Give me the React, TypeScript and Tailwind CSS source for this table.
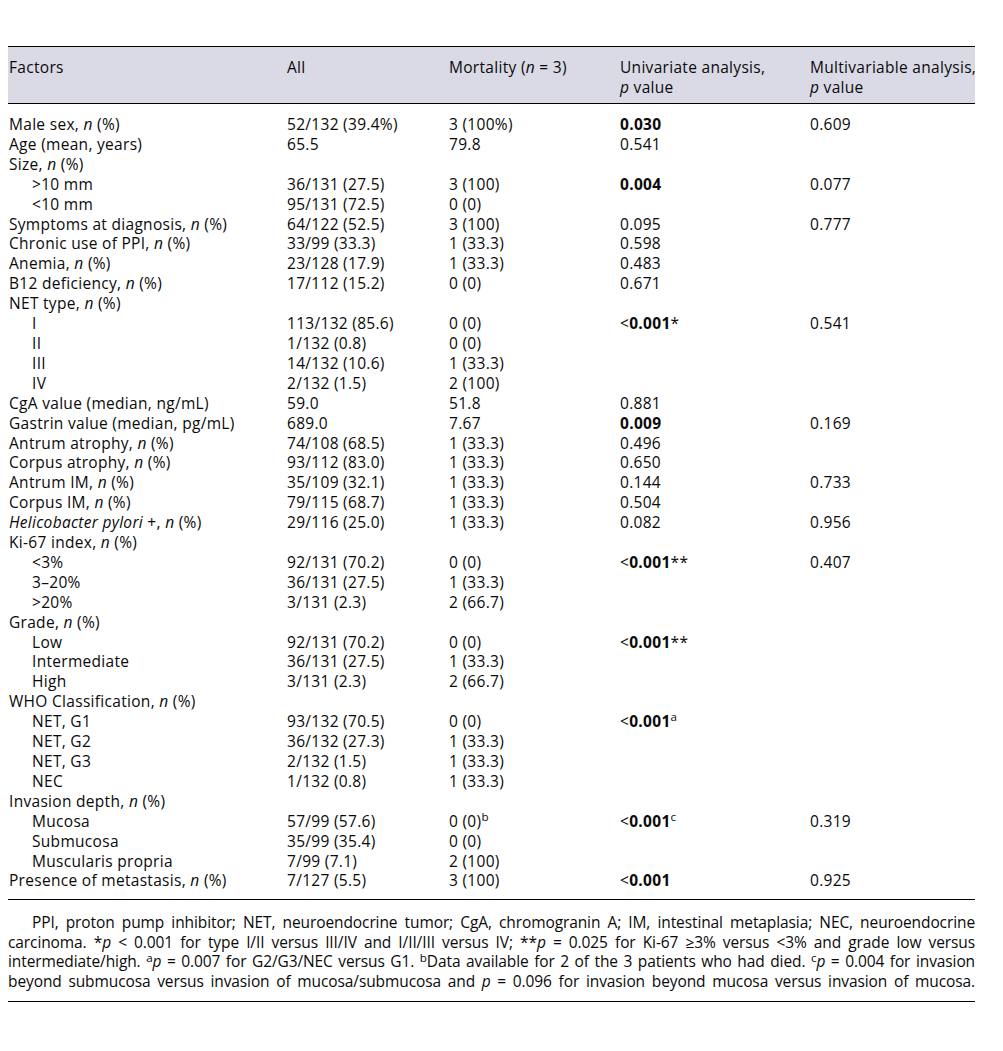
import React from "react";

type Row = {
  label: React.ReactNode;
  sub?: boolean;
  all?: string;
  mort?: React.ReactNode;
  uni?: React.ReactNode;
  multi?: string;
};

const N = () => <i>n</i>;
const P = () => <i>p</i>;

const Sig = ({ v, lt, mark }: { v: string; lt?: boolean; mark?: React.ReactNode }) => (
  <span>
    {lt && <span>&lt;</span>}
    <b className="font-bold">{v}</b>
    {mark}
  </span>
);

const rows: Row[] = [
  { label: <>Male sex, <N /> (%)</>, all: "52/132 (39.4%)", mort: "3 (100%)", uni: <Sig v="0.030" />, multi: "0.609" },
  { label: "Age (mean, years)", all: "65.5", mort: "79.8", uni: "0.541" },
  { label: <>Size, <N /> (%)</> },
  { label: ">10 mm", sub: true, all: "36/131 (27.5)", mort: "3 (100)", uni: <Sig v="0.004" />, multi: "0.077" },
  { label: "<10 mm", sub: true, all: "95/131 (72.5)", mort: "0 (0)" },
  { label: <>Symptoms at diagnosis, <N /> (%)</>, all: "64/122 (52.5)", mort: "3 (100)", uni: "0.095", multi: "0.777" },
  { label: <>Chronic use of PPI, <N /> (%)</>, all: "33/99 (33.3)", mort: "1 (33.3)", uni: "0.598" },
  { label: <>Anemia, <N /> (%)</>, all: "23/128 (17.9)", mort: "1 (33.3)", uni: "0.483" },
  { label: <>B12 deficiency, <N /> (%)</>, all: "17/112 (15.2)", mort: "0 (0)", uni: "0.671" },
  { label: <>NET type, <N /> (%)</> },
  { label: "I", sub: true, all: "113/132 (85.6)", mort: "0 (0)", uni: <Sig v="0.001" lt mark="*" />, multi: "0.541" },
  { label: "II", sub: true, all: "1/132 (0.8)", mort: "0 (0)" },
  { label: "III", sub: true, all: "14/132 (10.6)", mort: "1 (33.3)" },
  { label: "IV", sub: true, all: "2/132 (1.5)", mort: "2 (100)" },
  { label: "CgA value (median, ng/mL)", all: "59.0", mort: "51.8", uni: "0.881" },
  { label: "Gastrin value (median, pg/mL)", all: "689.0", mort: "7.67", uni: <Sig v="0.009" />, multi: "0.169" },
  { label: <>Antrum atrophy, <N /> (%)</>, all: "74/108 (68.5)", mort: "1 (33.3)", uni: "0.496" },
  { label: <>Corpus atrophy, <N /> (%)</>, all: "93/112 (83.0)", mort: "1 (33.3)", uni: "0.650" },
  { label: <>Antrum IM, <N /> (%)</>, all: "35/109 (32.1)", mort: "1 (33.3)", uni: "0.144", multi: "0.733" },
  { label: <>Corpus IM, <N /> (%)</>, all: "79/115 (68.7)", mort: "1 (33.3)", uni: "0.504" },
  { label: <><i>Helicobacter pylori</i> +, <N /> (%)</>, all: "29/116 (25.0)", mort: "1 (33.3)", uni: "0.082", multi: "0.956" },
  { label: <>Ki-67 index, <N /> (%)</> },
  { label: "<3%", sub: true, all: "92/131 (70.2)", mort: "0 (0)", uni: <Sig v="0.001" lt mark="**" />, multi: "0.407" },
  { label: "3–20%", sub: true, all: "36/131 (27.5)", mort: "1 (33.3)" },
  { label: ">20%", sub: true, all: "3/131 (2.3)", mort: "2 (66.7)" },
  { label: <>Grade, <N /> (%)</> },
  { label: "Low", sub: true, all: "92/131 (70.2)", mort: "0 (0)", uni: <Sig v="0.001" lt mark="**" /> },
  { label: "Intermediate", sub: true, all: "36/131 (27.5)", mort: "1 (33.3)" },
  { label: "High", sub: true, all: "3/131 (2.3)", mort: "2 (66.7)" },
  { label: <>WHO Classification, <N /> (%)</> },
  { label: "NET, G1", sub: true, all: "93/132 (70.5)", mort: "0 (0)", uni: <Sig v="0.001" lt mark={<sup>a</sup>} /> },
  { label: "NET, G2", sub: true, all: "36/132 (27.3)", mort: "1 (33.3)" },
  { label: "NET, G3", sub: true, all: "2/132 (1.5)", mort: "1 (33.3)" },
  { label: "NEC", sub: true, all: "1/132 (0.8)", mort: "1 (33.3)" },
  { label: <>Invasion depth, <N /> (%)</> },
  { label: "Mucosa", sub: true, all: "57/99 (57.6)", mort: <>0 (0)<sup>b</sup></>, uni: <Sig v="0.001" lt mark={<sup>c</sup>} />, multi: "0.319" },
  { label: "Submucosa", sub: true, all: "35/99 (35.4)", mort: "0 (0)" },
  { label: "Muscularis propria", sub: true, all: "7/99 (7.1)", mort: "2 (100)" },
  { label: <>Presence of metastasis, <N /> (%)</>, all: "7/127 (5.5)", mort: "3 (100)", uni: <Sig v="0.001" lt />, multi: "0.925" },
];

const cols = "grid grid-cols-[278px_162px_171px_190px_1fr]";

export default function App() {
  return (
    <div className="bg-white w-[1003px] h-[1051px] pt-[46px] pl-[8px] text-[#0a0a0a] font-['Open_Sans',sans-serif]">
      <div className="w-[967px]">
        {/* header */}
        <div className={`${cols} bg-[#dadae6] border-t-[1.5px] border-b-[1.5px] border-black pt-[10px] pb-[6px] pl-[1px] text-[15.5px] leading-[20px] tracking-[0.3px]`}>
          <div>Factors</div>
          <div>All</div>
          <div>
            Mortality (<N /> = 3)
          </div>
          <div>
            Univariate analysis,
            <br />
            <P /> value
          </div>
          <div className="whitespace-nowrap">
            Multivariable analysis,
            <br />
            <P /> value
          </div>
        </div>

        {/* body */}
        <div className="pt-[11px] pb-[8px] border-b-[1.5px] border-black text-[15.5px] leading-[19.9px] tracking-[0.3px]">
          {rows.map((r, i) => (
            <div key={i} className={`${cols} pl-[1px] whitespace-nowrap`}>
              <div className={r.sub ? "pl-[23px]" : ""}>{r.label}</div>
              <div>{r.all}</div>
              <div>{r.mort}</div>
              <div>{r.uni}</div>
              <div>{r.multi}</div>
            </div>
          ))}
        </div>

        {/* footnote */}
        <div className="pt-[13px] pb-[10px] border-b-[1.5px] border-black text-[15.5px] leading-[19.5px] tracking-[-0.1px]">
          <div className="pl-[24px] text-justify [text-align-last:justify] whitespace-nowrap">
            PPI, proton pump inhibitor; NET, neuroendocrine tumor; CgA, chromogranin A; IM, intestinal metaplasia; NEC, neuroendocrine
          </div>
          <div className="text-justify [text-align-last:justify] whitespace-nowrap">
            carcinoma. *<P /> &lt; 0.001 for type I/II versus III/IV and I/II/III versus IV; **<P /> = 0.025 for Ki-67 ≥3% versus &lt;3% and grade low versus
          </div>
          <div className="text-justify [text-align-last:justify] whitespace-nowrap">
            intermediate/high. <sup>a</sup><P /> = 0.007 for G2/G3/NEC versus G1. <sup>b</sup>Data available for 2 of the 3 patients who had died. <sup>c</sup><P /> = 0.004 for invasion
          </div>
          <div className="text-justify [text-align-last:justify] whitespace-nowrap">
            beyond submucosa versus invasion of mucosa/submucosa and <P /> = 0.096 for invasion beyond mucosa versus invasion of mucosa.
          </div>
        </div>
      </div>
    </div>
  );
}
